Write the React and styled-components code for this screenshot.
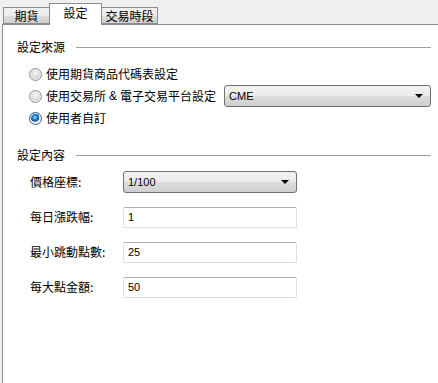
import React from 'react';
import styled, { createGlobalStyle } from 'styled-components';

const GlobalStyle = createGlobalStyle`
  html, body {
    margin: 0;
    padding: 0;
    background: #ffffff;
  }

  body {
    width: 438px;
    height: 383px;
    overflow: hidden;
    font-family: "Noto Sans CJK TC", "Noto Sans", sans-serif;
    font-size: 12px;
    color: #000;
  }
`;

const Window = styled.div`
  display: flex;
  flex-direction: column;
  width: 438px;
  height: 383px;
  background: #f0f0f0;
`;

const TabStrip = styled.div`
  display: flex;
  align-items: flex-end;
  height: 24px;
  padding-left: 3px;
  position: relative;
  z-index: 1;
`;

const Tab = styled.div`
  box-sizing: border-box;
  display: flex;
  align-items: center;
  justify-content: center;
  width: ${(p) => p.$width}px;
  height: ${(p) => (p.$active ? 22 : 17)}px;
  margin-left: ${(p) => (p.$active ? -1 : 0)}px;
  margin-right: ${(p) => (p.$active ? -1 : 0)}px;
  margin-bottom: ${(p) => (p.$active ? -1 : 0)}px;
  padding-bottom: ${(p) => (p.$active ? 3 : 0)}px;
  border: 1px solid #898c95;
  border-bottom: ${(p) => (p.$active ? 'none' : '1px solid #898c95')};
  background: ${(p) =>
    p.$active ? '#ffffff' : 'linear-gradient(#f2f2f2, #ebebeb 50%, #dddddd 51%, #cfcfcf)'};
  line-height: 14px;
  position: relative;
  z-index: ${(p) => (p.$active ? 2 : 1)};
`;

const Panel = styled.div`
  flex: 1;
  margin-left: 2px;
  border-left: 1px solid #898c95;
  border-top: 1px solid #898c95;
  background: #ffffff;
  padding: 15px 7px 0 14px;
`;

const SectionHeader = styled.div`
  display: flex;
  align-items: center;
  height: 14px;
  line-height: 14px;
  margin-top: ${(p) => p.$top || 0}px;

  &::after {
    content: '';
    flex: 1;
    height: 1px;
    margin-left: 11px;
    background: #a0a0a0;
  }
`;

const RadioGroup = styled.div`
  display: flex;
  flex-direction: column;
  margin-top: 9px;
  padding-left: 12px;
`;

const RadioRow = styled.label`
  display: flex;
  align-items: center;
  height: 22px;
  line-height: 14px;
`;

const RadioDot = styled.span`
  box-sizing: border-box;
  width: 13px;
  height: 13px;
  margin-right: 4px;
  border-radius: 50%;
  border: 1px solid ${(p) => (p.$checked ? '#2c628b' : '#8e8f8f')};
  background: ${(p) =>
    p.$checked
      ? 'radial-gradient(circle at 45% 40%, #9fe2ff 0, #2a8fd6 2px, #0d4c8f 4px, #e3e3e3 4.5px, #f8f8f8 6px)'
      : 'radial-gradient(circle at 50% 40%, #f6f6f6 0, #dcdcdc 4px, #cfcfcf 6px)'};
  box-shadow: inset 0 0 0 1px #f4f4f4;
`;

const Amp = styled.span`
  font-family: "Liberation Sans", sans-serif;
  margin: 0 3px;
`;

const Select = styled.div`
  box-sizing: border-box;
  display: flex;
  align-items: center;
  justify-content: space-between;
  width: ${(p) => p.$width}px;
  height: 22px;
  margin-left: ${(p) => p.$left || 0}px;
  padding: 0 7px 0 4px;
  border: 1px solid #707070;
  border-radius: 3px;
  background: linear-gradient(#f2f2f2, #ebebeb 50%, #dddddd 51%, #cfcfcf);
  font-family: "Liberation Sans", sans-serif;
  font-size: 11px;

  &::after {
    content: '';
    border-left: 4px solid transparent;
    border-right: 4px solid transparent;
    border-top: 4px solid #000;
  }
`;

const Form = styled.div`
  display: flex;
  flex-direction: column;
  gap: 13px;
  margin-top: 9px;
  padding-left: 13px;
`;

const FieldRow = styled.div`
  display: flex;
  align-items: center;
  height: 22px;
`;

const FieldLabel = styled.span`
  width: 93px;
  line-height: 14px;
`;

const TextBox = styled.div`
  box-sizing: border-box;
  display: flex;
  align-items: center;
  width: 174px;
  height: 21px;
  padding-left: 4px;
  border: 1px solid #dbdfe6;
  border-top-color: #abadb3;
  border-radius: 2px;
  background: #fff;
  font-family: "Liberation Sans", sans-serif;
  font-size: 11px;
`;

const tabs = [
  { label: '期貨', width: 47 },
  { label: '設定', width: 53, active: true },
  { label: '交易時段', width: 57 },
];

const sources = ['使用期貨商品代碼表設定', 'exchange', '使用者自訂'];

const fields = [
  { label: '每日漲跌幅:', value: '1' },
  { label: '最小跳動點數:', value: '25' },
  { label: '每大點金額:', value: '50' },
];

export default function App() {
  return (
    <Window>
      <GlobalStyle />
      <TabStrip>
        {tabs.map((t) => (
          <Tab key={t.label} $width={t.width} $active={t.active}>
            {t.label}
          </Tab>
        ))}
      </TabStrip>

      <Panel>
        <SectionHeader>設定來源</SectionHeader>
        <RadioGroup>
          {sources.map((s, i) => (
            <RadioRow key={s}>
              <RadioDot $checked={i === 2} />
              {s === 'exchange' ? (
                <>
                  使用交易所<Amp>&amp;</Amp>電子交易平台設定
                  <Select $width={207} $left={8}>CME</Select>
                </>
              ) : (
                s
              )}
            </RadioRow>
          ))}
        </RadioGroup>

        <SectionHeader $top={19}>設定內容</SectionHeader>
        <Form>
          <FieldRow>
            <FieldLabel>價格座標:</FieldLabel>
            <Select $width={174}>1/100</Select>
          </FieldRow>
          {fields.map((f) => (
            <FieldRow key={f.label}>
              <FieldLabel>{f.label}</FieldLabel>
              <TextBox>{f.value}</TextBox>
            </FieldRow>
          ))}
        </Form>
      </Panel>
    </Window>
  );
}
